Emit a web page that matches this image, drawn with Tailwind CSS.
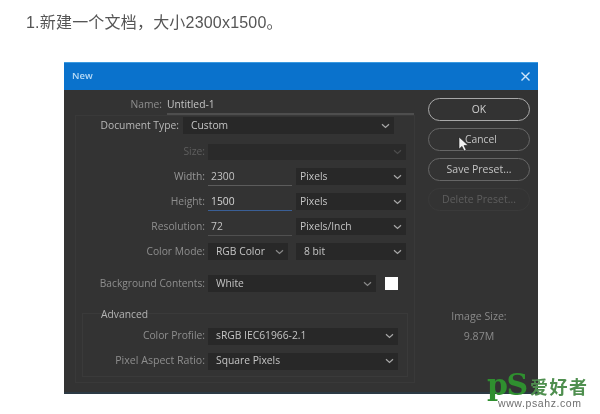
<!DOCTYPE html>
<html lang="zh"><head><meta charset="utf-8"><script src="https://cdn.jsdelivr.net/npm/@tailwindcss/browser@4"></script></head>
<body class="bg-white">
<div class="relative w-[600px] h-[414px] overflow-hidden bg-white font-['Liberation_Sans','Noto_Sans_CJK_SC',sans-serif] blur-[0.35px]">
  <h1 class="pl-[26px] pt-[12px] h-[62px] text-[16px] tracking-[0.2px] leading-[22px] font-normal text-[#555555]">1.新建一个文档，大小2300x1500。</h1>
  <div class="relative ml-[64px] w-[474px] h-[332px] bg-[#333333] font-['Open_Sans',sans-serif] text-[10.3px] text-[#c4c4c4] shadow-[inset_0_-2px_0_#2c3a44]">
    <div class="flex items-center justify-between h-[28px] px-[8px] bg-[#0a72cc] border-t border-[#3a9ae0] text-[#b9dcf7] font-semibold text-[9.5px]">
      <span>New</span>
      <svg class="w-[11px] h-[11px] mr-[-1px]" viewBox="0 0 11 11" fill="none" stroke="#cfe6fa" stroke-width="1.4"><path d="M1.5 1.5l8 8M9.5 1.5l-8 8"/></svg>
    </div>
    <div class="absolute left-[11px] top-[53px] w-[340px] h-[268px] border border-[#393939] pointer-events-none"></div>
    <div class="absolute left-[18px] top-[251px] w-[326px] h-[64px] border border-[#3a3a3a] pointer-events-none"></div>
    <div class="relative flex">
      <div class="w-[350px] pt-[4px]">
        <div class="flex items-center h-[21px]">
          <span class="w-[98px] text-right text-[#8e8e8e] mr-[5px] shrink-0">Name:</span>
          <span class="w-[247px] h-[21px] leading-[20px] border-b-2 border-[#4e4e4e]">Untitled-1</span>
        </div>
        <div class="flex items-center h-[21px]">
          <span class="w-[115px] text-right text-[#b8b8b8] shrink-0">Document Type:</span>
          <div class="ml-[4px] w-[211px] h-[17px] bg-[#282828] flex items-center justify-between pl-[8px] pr-[4px]"><span>Custom</span><svg class="w-[9px] h-[6px]" viewBox="0 0 9 6" fill="none" stroke="#a8a8a8" stroke-width="1.2"><path d="M1 1.2l3.5 3.3 3.5-3.3"/></svg></div>
        </div>
        <div class="flex items-center h-[25px] mt-[3px]">
          <span class="w-[141px] text-right text-[#5f5f5f] shrink-0">Size:</span>
          <div class="ml-[3px] w-[198px] h-[16px] bg-[#2a2a2a] flex items-center justify-end pr-[4px]"><svg class="w-[9px] h-[6px]" viewBox="0 0 9 6" fill="none" stroke="#4d4d4d" stroke-width="1.2"><path d="M1 1.2l3.5 3.3 3.5-3.3"/></svg></div>
        </div>
        <div class="flex items-center h-[25px]">
          <span class="w-[141px] text-right text-[#979797] shrink-0">Width:</span>
          <span class="ml-[3px] w-[84px] h-[18px] leading-[16px] pl-[3px] border-b border-[#5c5c5c]">2300</span>
          <div class="ml-[4px] w-[110px] h-[17px] bg-[#282828] flex items-center justify-between pl-[4px] pr-[4px]"><span>Pixels</span><svg class="w-[9px] h-[6px]" viewBox="0 0 9 6" fill="none" stroke="#a8a8a8" stroke-width="1.2"><path d="M1 1.2l3.5 3.3 3.5-3.3"/></svg></div>
        </div>
        <div class="flex items-center h-[25px]">
          <span class="w-[141px] text-right text-[#8e8e8e] shrink-0">Height:</span>
          <span class="ml-[3px] w-[84px] h-[18px] leading-[16px] pl-[3px] border-b border-[#3a5f96] text-[#d4d4d4]">1500</span>
          <div class="ml-[4px] w-[110px] h-[17px] bg-[#282828] flex items-center justify-between pl-[4px] pr-[4px]"><span>Pixels</span><svg class="w-[9px] h-[6px]" viewBox="0 0 9 6" fill="none" stroke="#a8a8a8" stroke-width="1.2"><path d="M1 1.2l3.5 3.3 3.5-3.3"/></svg></div>
        </div>
        <div class="flex items-center h-[25px]">
          <span class="w-[141px] text-right text-[#8e8e8e] shrink-0">Resolution:</span>
          <span class="ml-[3px] w-[84px] h-[18px] leading-[16px] pl-[3px] border-b border-[#505050]">72</span>
          <div class="ml-[4px] w-[110px] h-[17px] bg-[#282828] flex items-center justify-between pl-[4px] pr-[4px]"><span>Pixels/Inch</span><svg class="w-[9px] h-[6px]" viewBox="0 0 9 6" fill="none" stroke="#a8a8a8" stroke-width="1.2"><path d="M1 1.2l3.5 3.3 3.5-3.3"/></svg></div>
        </div>
        <div class="flex items-center h-[25px]">
          <span class="w-[141px] text-right text-[#8e8e8e] shrink-0">Color Mode:</span>
          <div class="ml-[3px] w-[80px] h-[17px] bg-[#282828] flex items-center justify-between pl-[8px] pr-[4px]"><span>RGB Color</span><svg class="w-[9px] h-[6px]" viewBox="0 0 9 6" fill="none" stroke="#8a8a8a" stroke-width="1.2"><path d="M1 1.2l3.5 3.3 3.5-3.3"/></svg></div>
          <div class="ml-[8px] w-[110px] h-[17px] bg-[#282828] flex items-center justify-between pl-[8px] pr-[4px]"><span>8 bit</span><svg class="w-[9px] h-[6px]" viewBox="0 0 9 6" fill="none" stroke="#a8a8a8" stroke-width="1.2"><path d="M1 1.2l3.5 3.3 3.5-3.3"/></svg></div>
        </div>
        <div class="flex items-center h-[25px] mt-[7px]">
          <span class="w-[141px] text-right text-[10.2px] text-[#8e8e8e] shrink-0">Background Contents:</span>
          <div class="ml-[3px] w-[168px] h-[17px] bg-[#282828] flex items-center justify-between pl-[8px] pr-[4px]"><span>White</span><svg class="w-[9px] h-[6px]" viewBox="0 0 9 6" fill="none" stroke="#8a8a8a" stroke-width="1.2"><path d="M1 1.2l3.5 3.3 3.5-3.3"/></svg></div>
          <div class="ml-[9px] w-[13px] h-[13px] bg-white"></div>
        </div>
        <div class="h-[22px] mt-[7px] pl-[37px] leading-[22px] text-[#b4b4b4]">Advanced</div>
        <div class="flex items-center h-[24px] mt-[-1px]">
          <span class="w-[141px] text-right text-[#8e8e8e] shrink-0">Color Profile:</span>
          <div class="ml-[3px] w-[190px] h-[17px] bg-[#282828] flex items-center justify-between pl-[8px] pr-[4px]"><span>sRGB IEC61966-2.1</span><svg class="w-[9px] h-[6px]" viewBox="0 0 9 6" fill="none" stroke="#a8a8a8" stroke-width="1.2"><path d="M1 1.2l3.5 3.3 3.5-3.3"/></svg></div>
        </div>
        <div class="flex items-center h-[24px] mt-[1px]">
          <span class="w-[141px] text-right text-[10.6px] text-[#8e8e8e] shrink-0">Pixel Aspect Ratio:</span>
          <div class="ml-[3px] w-[190px] h-[17px] bg-[#282828] flex items-center justify-between pl-[8px] pr-[4px]"><span>Square Pixels</span><svg class="w-[9px] h-[6px]" viewBox="0 0 9 6" fill="none" stroke="#a8a8a8" stroke-width="1.2"><path d="M1 1.2l3.5 3.3 3.5-3.3"/></svg></div>
        </div>
      </div>
      <div class="ml-[14px] w-[102px] pt-[8px] flex flex-col items-stretch gap-[7px] text-center">
        <div class="h-[23px] leading-[20px] rounded-full border-[1.5px] border-[#a8a8a8] text-[#d0d0d0]">OK</div>
        <div class="h-[23px] leading-[20px] rounded-full border-[1.5px] border-[#666666] pl-[4px]">Cancel</div>
        <div class="h-[23px] leading-[20px] rounded-full border-[1.5px] border-[#666666] text-[10.5px]">Save Preset...</div>
        <div class="h-[23px] leading-[20px] rounded-full border border-[#3a3a3a] text-[#5e5e5e] text-[10.5px]">Delete Preset...</div>
        <div class="mt-[88px] text-[#8a8a8a] text-[10.6px] leading-[20px]">Image Size:<br>9.87M</div>
      </div>
    </div>
    <svg class="absolute left-[394px] top-[74px] w-[11px] h-[16px]" viewBox="0 0 11 16"><path d="M1 1l0 12 3-2.6 2.2 4.6 2-1-2.2-4.4 4-.4z" fill="#f2f2f2" stroke="#222" stroke-width=".6"/></svg>
  </div>
  <div class="absolute left-[487px] top-[370px] w-[110px] h-[40px]">
    <span class="absolute left-0 top-[5px] font-['DejaVu_Serif',serif] font-bold text-[30px] leading-[20px] text-[#2f8f2f] tracking-[-1.5px]">pS</span>
    <span class="absolute left-[43px] top-[7px] font-['Noto_Sans_CJK_SC',sans-serif] font-bold text-[18px] leading-[18px] tracking-[1.5px] text-[#4f8f4f]">爱好者</span>
    <span class="absolute left-[11px] top-[27px] text-[10.5px] leading-[12px] tracking-[0.6px] text-[#6e6e6e]">www.psahz.com</span>
  </div>
</div>
</body></html>
